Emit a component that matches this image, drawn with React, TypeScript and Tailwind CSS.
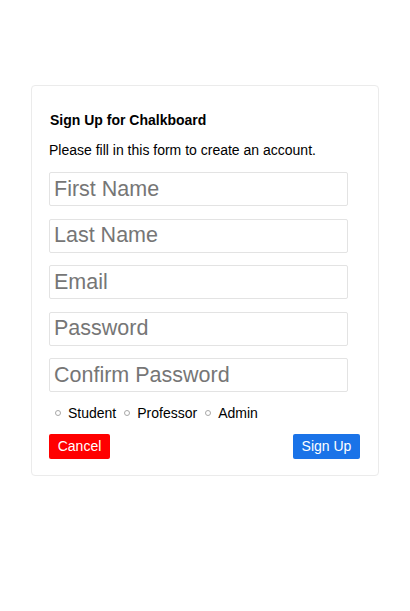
const fields = ["First Name", "Last Name", "Email", "Password", "Confirm Password"]
const roles = ["Student", "Professor", "Admin"]

export default function App() {
  return (
    <main className="min-h-[611px] bg-white pt-[85px] font-['Liberation_Sans',Arial,sans-serif] text-black">
      <form className="mx-auto w-[348px] rounded-[4px] border border-[#ebebeb] pl-[17px] pr-[18px] pt-[26px] pb-[16px]">
        <h3 className="pl-px text-[14px] font-bold leading-4">Sign Up for Chalkboard</h3>
        <p className="mt-[14px] text-[14px] leading-[17px]">Please fill in this form to create an account.</p>

        <div className="mt-[13px] flex flex-col gap-[12.5px]">
          {fields.map((f) => (
            <input
              key={f}
              type={f.includes("Password") ? "password" : "text"}
              placeholder={f}
              className="h-[34px] w-[299px] rounded-[2px] border border-[#e3e3e3] px-[4px] text-[21.5px] outline-none placeholder:text-[#767676]"
            />
          ))}
        </div>

        <div className="mt-[12px] flex h-[18px] items-center pl-[6px] text-[14px]">
          {roles.map((r) => (
            <label key={r} className="mr-[8px] flex items-center">
              <span className="mr-[7px] h-[6px] w-[6px] rounded-full border border-[#a8a8a8]" />
              {r}
            </label>
          ))}
        </div>

        <div className="mt-[12px] flex items-center justify-between">
          <button type="button" className="h-[25px] w-[61px] rounded-[2px] bg-[#ff0000] text-[14px] text-white">
            Cancel
          </button>
          <button type="submit" className="h-[25px] w-[67px] rounded-[2px] bg-[#1a73e8] text-[14px] text-white">
            Sign Up
          </button>
        </div>
      </form>
    </main>
  )
}
